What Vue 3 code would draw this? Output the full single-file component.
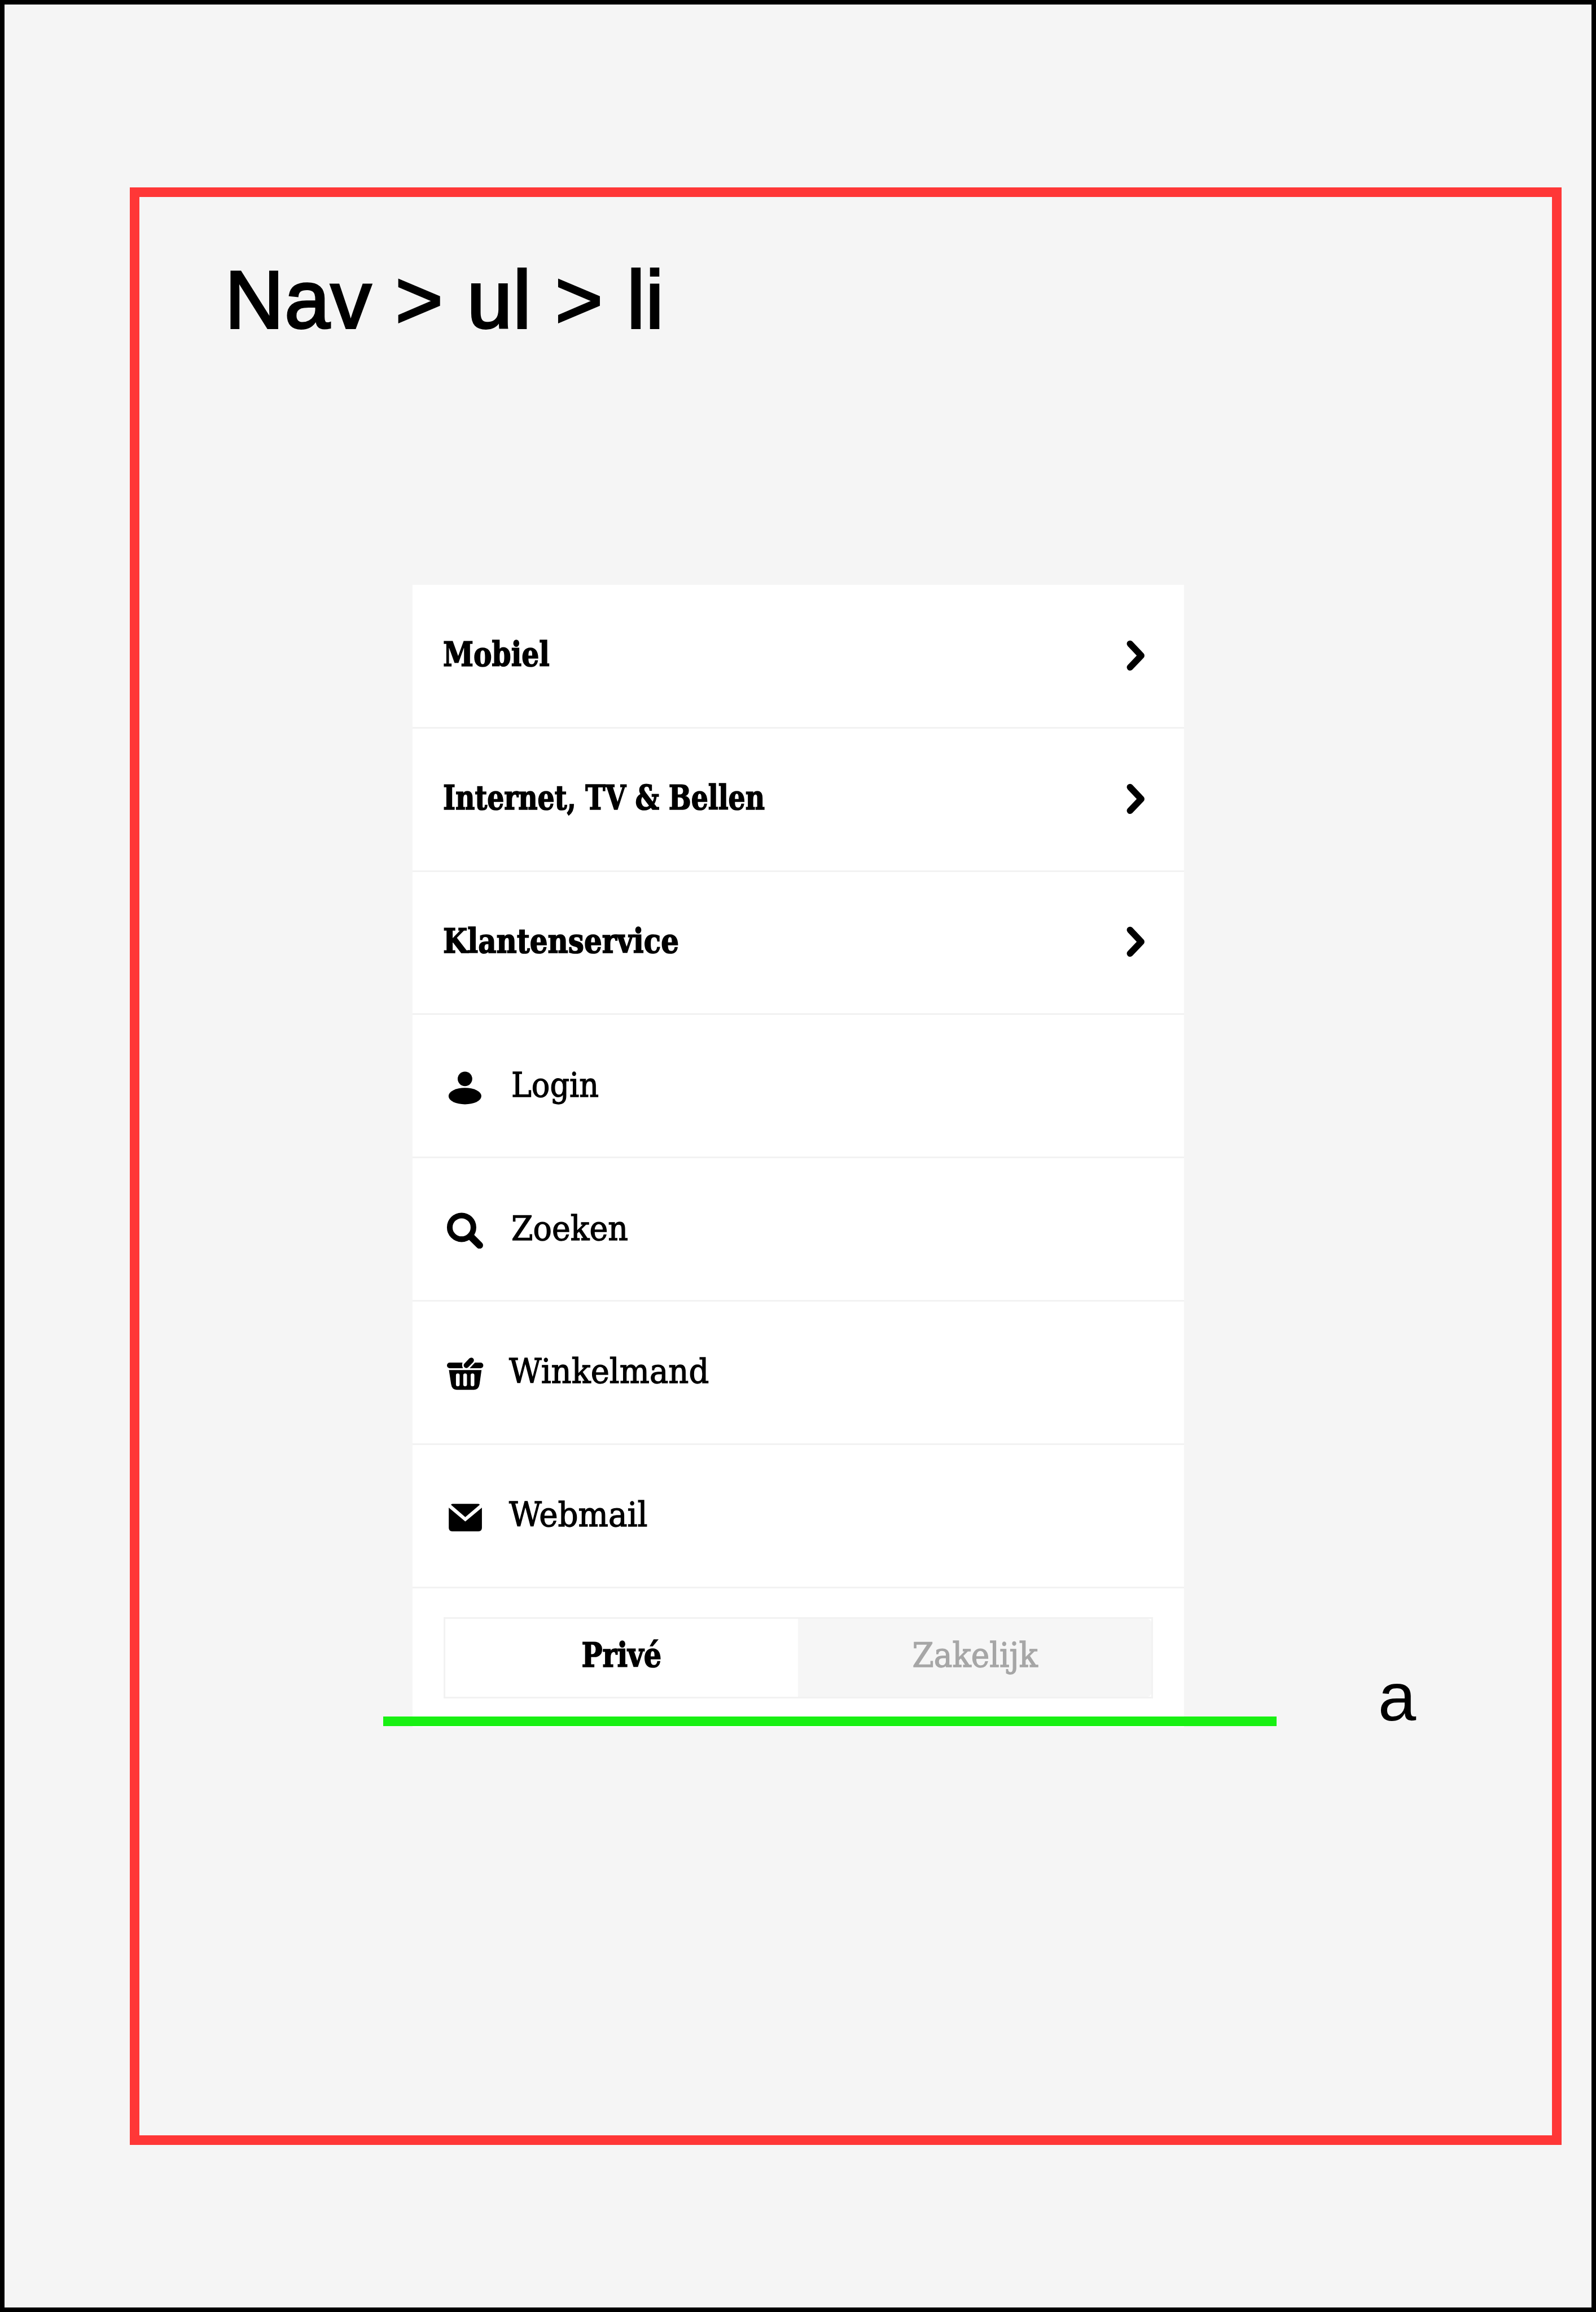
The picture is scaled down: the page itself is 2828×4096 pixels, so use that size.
<script setup>
const sections = [
  { label: 'Mobiel', width: 1.96 },
  { label: 'Internet, TV & Bellen', width: 5.92 },
  { label: 'Klantenservice', width: 4.34 },
]

const shortcuts = [
  { label: 'Login', icon: 'user', width: 1.61 },
  { label: 'Zoeken', icon: 'search', width: 2.15 },
  { label: 'Winkelmand', icon: 'basket', width: 3.68, wide: true },
  { label: 'Webmail', icon: 'mail', width: 2.55, wide: true },
]

// Condenses a label horizontally to the given width in rem.
const vFit = {
  mounted(el, { value }) {
    const rem = parseFloat(getComputedStyle(document.documentElement).fontSize)
    el.style.transform = `scaleX(${(value * rem) / el.getBoundingClientRect().width})`
  },
}
</script>

<template>
  <div class="page">
    <section class="frame">
      <h1 class="title">Nav &gt; ul &gt; li</h1>

      <nav class="card">
        <ul class="menu">
          <li v-for="item in sections" :key="item.label" class="row strong">
            <span v-fit="item.width" class="label">{{ item.label }}</span>
            <svg class="chevron" viewBox="0 0 48 72">
              <path d="M9.7 13 30.3 34.7 9.7 56.3" fill="none" stroke="#000" stroke-width="12" stroke-linecap="round" stroke-linejoin="round" />
            </svg>
          </li>
          <li v-for="item in shortcuts" :key="item.label" class="row">
            <svg class="icon" viewBox="0 0 72 72">
              <template v-if="item.icon === 'user'">
                <circle cx="35.2" cy="23.2" r="13.4" />
                <ellipse cx="35.2" cy="54.9" rx="30.2" ry="15.2" />
              </template>
              <template v-else-if="item.icon === 'search'">
                <circle cx="29" cy="32.6" r="21.8" fill="none" stroke="#000" stroke-width="10.4" />
                <path d="M47 50.6 62 65.6" fill="none" stroke="#000" stroke-width="13" stroke-linecap="round" />
              </template>
              <template v-else-if="item.icon === 'basket'">
                <path d="M7.2 17.7H30.7Q28.9 23 31.4 28H7.2A5.1 5.1 0 0 1 7.2 17.7Z" />
                <path d="M53.6 17.7H63.8A5.1 5.1 0 0 1 63.8 28H43.9Z" />
                <path d="M37.7 22.8 46.8 13.4" fill="none" stroke="#000" stroke-width="9.8" stroke-linecap="round" />
                <path fill-rule="evenodd" d="M5.7 31.3H65.7L62 57.5Q60.3 67.7 51.5 67.7H20Q11.2 67.7 9.7 57.5ZM18.6 41V58Q18.6 61.3 22 61.3T25.4 58V41Q25.4 37.7 22 37.7T18.6 41ZM32.1 41V58Q32.1 61.3 35.5 61.3T38.9 58V41Q38.9 37.7 35.5 37.7T32.1 41ZM45.7 41V58Q45.7 61.3 49.1 61.3T52.5 58V41Q52.5 37.7 49.1 37.7T45.7 41Z" />
              </template>
              <template v-else>
                <path d="M9.3 15.2Q11 13.7 13 13.7H59Q61 13.7 62.6 15.2L35.8 38.2Z" />
                <path d="M5.4 20.7 35.8 46.2 66.4 20.7V58Q66.4 64.4 60 64.4H11.8Q5.4 64.4 5.4 58Z" />
              </template>
            </svg>
            <span v-fit="item.width" class="label" :class="{ wide: item.wide }">{{ item.label }}</span>
          </li>
        </ul>

        <div class="switch">
          <div class="option active"><span v-fit="1.47" class="label">Privé</span></div>
          <div class="option muted"><span v-fit="2.31" class="label">Zakelijk</span></div>
        </div>

        <div class="underline"></div>
        <span class="tag">a</span>
      </nav>
    </section>
  </div>
</template>

<style>
html {
  font-size: 96.289px;
}
body {
  margin: 0;
}
</style>

<style scoped>
.page {
  box-sizing: border-box;
  width: 2828px;
  height: 4096px;
  padding: 3.36rem 0.56rem 3rem 2.31rem;
  border: 8px solid #000;
  background: #f5f5f5;
  overflow: hidden;
}
.frame {
  box-sizing: border-box;
  width: 26.34rem;
  height: 36.02rem;
  border: 17px solid #ff3737;
}
.title {
  margin: 1.15rem 0 0 1.57rem;
  font: 400 1.5rem/1.5rem "Liberation Sans", Arial, sans-serif;
  letter-spacing: 0.013rem;
  -webkit-text-stroke: 0.04rem #000;
  white-space: nowrap;
}
.card {
  position: relative;
  box-sizing: border-box;
  width: 14.2rem;
  height: 21.02rem;
  margin: 4.49rem 0 0 5.02rem;
  padding-top: 0.01rem;
  background: #fff;
  font-family: "DejaVu Serif", serif;
  font-size: 0.63rem;
  line-height: 1;
  color: #000;
}
.menu {
  margin: 0;
  padding: 0;
  list-style: none;
}
.row {
  box-sizing: border-box;
  display: flex;
  align-items: center;
  height: 2.636rem;
  padding: 0 0.61rem 0 0.61rem;
  border-bottom: 3px solid #f2f2f2;
}
.strong {
  justify-content: space-between;
  padding-left: 0.565rem;
  font-weight: 700;
}
.label {
  display: inline-block;
  flex: none;
  margin-bottom: 0.035rem;
  transform-origin: left center;
  white-space: nowrap;
  -webkit-text-stroke: 0.014rem currentColor;
}
.strong .label,
.active .label {
  -webkit-text-stroke-width: 0.018rem;
}
.strong .label {
  margin-bottom: 0.06rem;
}
.icon {
  flex: none;
  width: 0.72rem;
  height: 0.72rem;
  margin-right: 0.49rem;
}
.label.wide {
  margin-left: -0.04rem;
}
.chevron {
  flex: none;
  width: 0.48rem;
  height: 0.72rem;
}
.switch {
  box-sizing: border-box;
  display: flex;
  width: 13.06rem;
  height: 1.49rem;
  margin: 0.535rem 0 0 0.57rem;
  border: 3px solid #f2f2f2;
}
.option {
  flex: 1;
  display: flex;
  align-items: center;
  justify-content: center;
}
.option .label {
  margin-bottom: 0.1rem;
  transform-origin: center;
}
.active {
  font-weight: 700;
}
.muted {
  border-radius: 0 0.07rem 0.07rem 0;
  background: #f6f6f6;
  color: #a6a6a6;
}
.underline {
  position: absolute;
  top: 20.82rem;
  left: -0.54rem;
  width: 16.44rem;
  height: 0.18rem;
  background: #18f013;
}
.tag {
  position: absolute;
  top: 19.71rem;
  left: 17.77rem;
  font: 400 1.26rem/1.5rem "Liberation Sans", Arial, sans-serif;
}
</style>
